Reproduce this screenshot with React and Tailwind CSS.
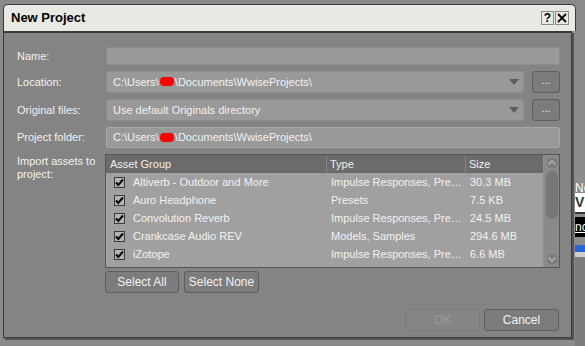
import React from "react";

const rows = [
  { name: "Altiverb - Outdoor and More", type: "Impulse Responses, Pre…", size: "30.3 MB" },
  { name: "Auro Headphone", type: "Presets", size: "7.5 KB" },
  { name: "Convolution Reverb", type: "Impulse Responses, Pre…", size: "24.5 MB" },
  { name: "Crankcase Audio REV", type: "Models, Samples", size: "294.6 MB" },
  { name: "iZotope", type: "Impulse Responses, Pre…", size: "6.6 MB" },
];

const Redacted = () => (
  <span className="inline-block w-[14px] h-[9px] bg-[#ff0000] rounded-[4px] align-middle mx-[1px] -mt-[2px]" />
);

const UserPath = () => (
  <span>
    C:\Users\<Redacted />\Documents\WwiseProjects\
  </span>
);

const Check = () => (
  <span className="w-[11px] h-[11px] border border-[#3c3c3c] bg-[#b4b4b4] flex items-center justify-center">
    <svg width="9" height="9" viewBox="0 0 9 9">
      <path d="M1 4.5 L3.3 7 L8 1.5" stroke="#000" strokeWidth="2" fill="none" />
    </svg>
  </span>
);

const Arrow = () => (
  <svg width="10" height="7" viewBox="0 0 10 7" className="mr-[4px]">
    <path d="M0 0 H10 L5 6 Z" fill="#5c5c5c" />
  </svg>
);

const DotsButton = () => (
  <button className="w-[28px] h-[22px] rounded-[3px] border border-[#5e5e5e] bg-[#7c7c7c] text-[#eeeeee] text-[11px] leading-none pb-[3px]">
    ...
  </button>
);

const Btn = ({ children, w, disabled }) => (
  <button
    className={`h-[22px] rounded-[3px] border text-[12px] ${
      disabled
        ? "border-[#7a7a7a] bg-[#858585] text-[#9c9c9c]"
        : "border-[#5e5e5e] bg-[#7c7c7c] text-[#f2f2f2]"
    } ${w}`}
  >
    {children}
  </button>
);

const ScrollCircle = ({ up }) => (
  <svg width="14" height="14" viewBox="0 0 14 14">
    <circle cx="7" cy="7" r="6" fill="#7a7a7a" stroke="#8c8c8c" />
    <path d={up ? "M3.5 8.5 L7 5 L10.5 8.5" : "M3.5 5.5 L7 9 L10.5 5.5"} stroke="#a8a8a8" strokeWidth="2" fill="none" />
  </svg>
);

const Background = () => (
  <div className="absolute inset-0 bg-[#8a8a8a] flex">
    <div className="flex-1" />
    <div className="w-[10px] flex flex-col text-[12px] text-white whitespace-nowrap">
      <div className="h-[183px] bg-[#8c8c8c]" />
      <div className="h-[10px] bg-[#8c8c8c] overflow-hidden leading-[10px] underline">No</div>
      <div className="h-[21px] bg-white text-[#333] font-bold text-[14px] leading-[18px] overflow-hidden border-b-[2px] border-[#333]">V</div>
      <div className="h-[3px] bg-[#8c8c8c]" />
      <div className="h-[20px] bg-black text-white underline leading-[20px] overflow-hidden">nc</div>
      <div className="h-[8px] bg-[#8c8c8c]" />
      <div className="h-[7px] bg-[#2a62d8]" />
      <div className="h-[5px] bg-[#cfcfcf]" />
      <div className="flex-1 bg-[#7c7c7c]" />
    </div>
  </div>
);

export default function App() {
  return (
    <div
      className="relative w-[585px] h-[346px] overflow-hidden"
      style={{ fontFamily: '"Liberation Sans", Arial, sans-serif' }}
    >
      <Background />
      <div className="absolute left-[3px] top-[4px] w-[573px] flex flex-col">
        {/* title bar */}
        <div className="h-[27px] bg-[#e9e9e4] border border-[#3a3a3a] border-b-0 rounded-t-[5px] flex items-center pl-[7px] pr-[6px]">
          <span className="text-[13px] font-bold text-black flex-1">New Project</span>
          <span className="w-[13px] h-[14px] border border-[#8a8a8a] flex items-center justify-center text-[12px] font-bold leading-none text-black mr-[1px]">?</span>
          <span className="w-[14px] h-[14px] border border-[#8a8a8a] flex items-center justify-center">
            <svg width="10" height="10" viewBox="0 0 10 10">
              <path d="M1 1 L9 9 M9 1 L1 9" stroke="#000" strokeWidth="1.8" />
            </svg>
          </span>
        </div>
        {/* body */}
        <div className="w-[569px] h-[307px] bg-[#848484] border border-[#3a3a3a] border-t-[2px] shadow-[2px_2px_0_#555] text-[11px] text-[#f2f2f2] pl-[13px] pr-[11px] pt-[14px] flex flex-col">
          <div className="grid grid-cols-[89px_1fr] gap-y-[6px] items-center">
            <span>Name:</span>
            <div className="h-[18px] bg-[#999999] border border-[#8e8e8e] rounded-[2px]" />

            <span>Location:</span>
            <div className="flex gap-[8px]">
              <div className="flex-1 h-[22px] bg-[#999999] border border-[#8e8e8e] rounded-[2px] flex items-center pl-[6px] justify-between">
                <UserPath />
                <Arrow />
              </div>
              <DotsButton />
            </div>

            <span>Original files:</span>
            <div className="flex gap-[8px]">
              <div className="flex-1 h-[22px] bg-[#999999] border border-[#8e8e8e] rounded-[2px] flex items-center pl-[6px] justify-between">
                <span>Use default Originals directory</span>
                <Arrow />
              </div>
              <DotsButton />
            </div>

            <span>Project folder:</span>
            <div className="h-[21px] bg-[#999999] border border-[#a8a8a8] rounded-[2px] flex items-center pl-[6px]">
              <UserPath />
            </div>

            <span className="self-start leading-[13px] mt-[1px]">
              Import assets to
              <br />
              project:
            </span>
            <div className="-ml-[1px] h-[114px] border border-[#555555] bg-[#a0a0a0] flex overflow-hidden">
              <div className="flex-1 flex flex-col">
                <div className="h-[18px] bg-[#6b6b6b] flex items-center text-[#f0f0f0] shrink-0">
                  <span className="w-[221px] pl-[4px] border-r border-[#888]">Asset Group</span>
                  <span className="w-[139px] pl-[3px] border-r border-[#888]">Type</span>
                  <span className="pl-[3px]">Size</span>
                </div>
                {rows.map((r) => (
                  <div key={r.name} className="h-[18px] flex items-center shrink-0">
                    <span className="w-[221px] flex items-center pl-[8px] gap-[8px]">
                      <Check />
                      {r.name}
                    </span>
                    <span className="w-[139px] pl-[4px]">{r.type}</span>
                    <span className="pl-[4px]">{r.size}</span>
                  </div>
                ))}
              </div>
              <div className="w-[16px] bg-[#8a8a8a] flex flex-col items-center py-[1px] border-l border-[#909090]">
                <ScrollCircle up />
                <div className="w-[12px] h-[48px] bg-[#777777] rounded-[6px] mt-[1px]" />
                <div className="flex-1" />
                <ScrollCircle />
              </div>
            </div>
          </div>

          <div className="flex gap-[5px] ml-[88px] mt-[3px]">
            <Btn w="w-[74px]">Select All</Btn>
            <Btn w="w-[75px]">Select None</Btn>
          </div>

          <div className="flex justify-end gap-[4px] mt-[16px] mr-[1px]">
            <Btn w="w-[75px]" disabled>OK</Btn>
            <Btn w="w-[75px]">Cancel</Btn>
          </div>
        </div>
      </div>
    </div>
  );
}
